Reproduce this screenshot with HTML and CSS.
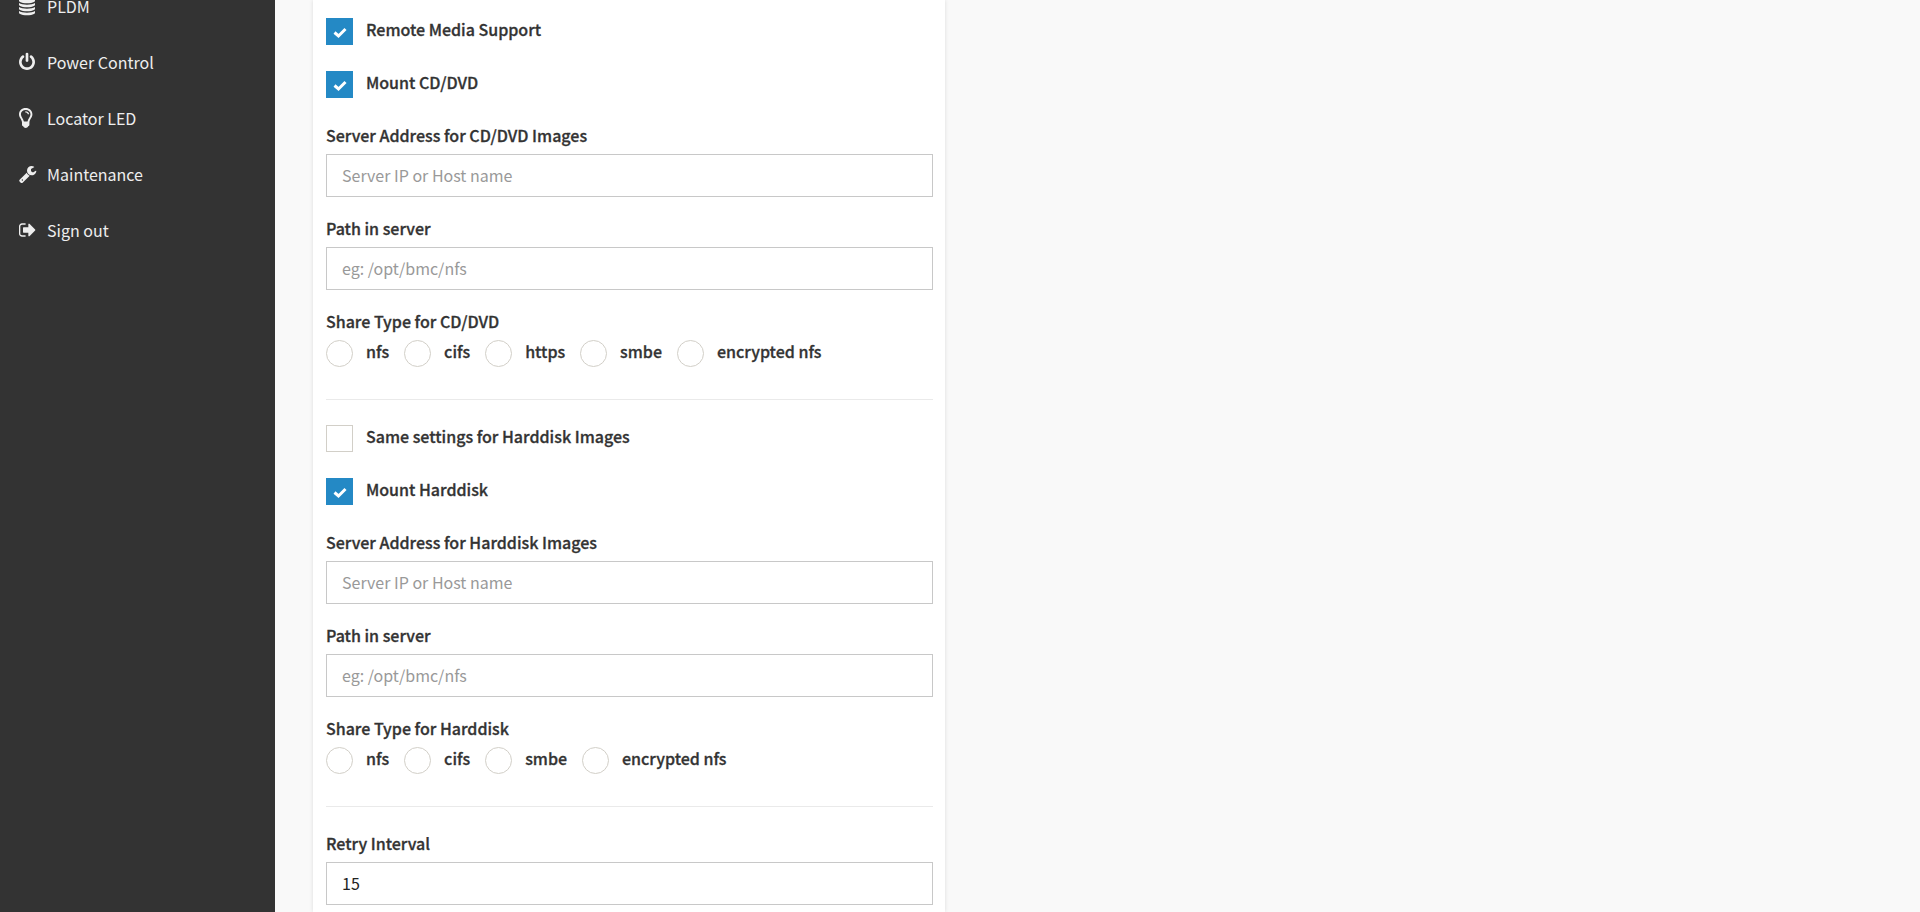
FILE: index.html
```html
<!DOCTYPE html>
<html lang="en">
<head>
<meta charset="utf-8">
<title>Media Redirection Settings</title>
<link rel="stylesheet" href="styles.css">
</head>
<body>
<div class="layout">
  <aside class="sidebar">
    <nav class="menu">
      <a class="menu-item" href="#pldm"><svg class="icon" viewBox="0 0 1536 1792"><path d="M768 768q237 0 443-43t325-127v170q0 69-103 128t-280 93.500-385 34.500-385-34.500-280-93.500-103-128v-170q119 84 325 127t443 43zm0 768q237 0 443-43t325-127v170q0 69-103 128t-280 93.500-385 34.500-385-34.500-280-93.500-103-128v-170q119 84 325 127t443 43zm0-384q237 0 443-43t325-127v170q0 69-103 128t-280 93.500-385 34.500-385-34.500-280-93.500-103-128v-170q119 84 325 127t443 43zm0-1152q208 0 385 34.500t280 93.500 103 128v128q0 69-103 128t-280 93.500-385 34.500-385-34.500-280-93.500-103-128v-128q0-69 103-128t280-93.500 385-34.500z"/></svg>PLDM</a>
      <a class="menu-item" href="#power"><svg class="icon" viewBox="0 0 1536 1792"><path d="M1536 896q0 156-61 298t-164 245-245 164-298 61-298-61-245-164-164-245-61-298q0-182 80.500-343t226.500-270q43-32 95.500-25t83.500 50q32 42 24.500 94.500t-49.500 84.500q-98 74-151.500 181t-53.500 228q0 104 40.500 198.500t109.500 163.500 163.500 109.500 198.500 40.500 198.500-40.500 163.500-109.500 109.500-163.500 40.500-198.500q0-121-53.500-228t-151.500-181q-42-32-49.500-84.500t24.500-94.500q31-43 84-50t95 25q146 109 226.500 270t80.500 343zm-640-768v640q0 52-38 90t-90 38-90-38-38-90v-640q0-52 38-90t90-38 90 38 38 90z"/></svg>Power Control</a>
      <a class="menu-item" href="#led"><svg class="icon" viewBox="0 0 16 20"><path fill-rule="evenodd" d="M6.600 0C10.500 0 13.400 2.700 13.400 6.200c0 3.400-2.700 4.700-3 8.300v2.300c0 .8-.5 1.300-1.200 1.500C8.700 19.400 7.800 20 6.700 20s-2-.6-2.500-1.700C3.500 18.100 3 17.600 3 16.800v-2.300C2.700 10.900 0 9.600 0 6.200 0 2.700 2.800 0 6.600 0zM6.700 1.900C3.900 1.900 1.900 3.800 1.900 6.200c0 2.600 2.400 4 3 7.300h3.600c.6-3.300 3-4.700 3-7.300 0-2.400-2-4.300-4.800-4.300z"/><path d="M6.300 3.300c2.200 0 3.700 1.100 3.800 2.900H8.800C8.600 5.100 7.700 4.500 6.300 4.500z"/></svg>Locator LED</a>
      <a class="menu-item" href="#maintenance"><svg class="icon" viewBox="0 0 1536 1792"><path d="M384 1472q0-26-19-45t-45-19-45 19-19 45 19 45 45 19 45-19 19-45zm644-420l-682 682q-37 37-90 37-52 0-91-37l-106-108q-38-36-38-90 0-53 38-91l681-681q39 98 114.500 173.500t173.500 114.500zm634-435q0 39-23 106-47 134-164.500 217.500t-258.500 83.500q-185 0-316.500-131.500t-131.500-316.500 131.500-316.500 316.500-131.500q58 0 121.500 16.500t107.500 46.500q16 11 16 28t-16 28l-293 169v224l193 107q5-3 79-48.500t135.500-81 70.500-35.500q15 0 23.500 10t8.500 25z"/></svg>Maintenance</a>
      <a class="menu-item" href="#signout"><svg class="icon" viewBox="0 0 1536 1792"><path d="M640 1440q0 4 1 20t.5 26.500-3 23.500-10 19.500-20.500 6.500h-320q-119 0-203.500-84.500t-84.500-203.500v-704q0-119 84.500-203.500t203.500-84.500h320q13 0 22.500 9.500t9.500 22.500q0 4 1 20t.5 26.500-3 23.500-10 19.500-20.500 6.500h-320q-66 0-113 47t-47 113v704q0 66 47 113t113 47h312l11.500 1 11.500 3 8 5.500 7 9 2 13.500zm928-544q0 26-19 45l-544 544q-19 19-45 19t-45-19-19-45v-288h-448q-26 0-45-19t-19-45v-384q0-26 19-45t45-19h448v-288q0-26 19-45t45-19 45 19l544 544q19 19 19 45z"/></svg>Sign out</a>
    </nav>
  </aside>
  <main class="content">
    <form class="panel">
      <label class="check"><input class="box" type="checkbox" checked><svg class="tick" viewBox="0 0 14 11"><path d="M1.500 5.500 5.500 9 12.500 2"/></svg>Remote Media Support</label>
      <label class="check"><input class="box" type="checkbox" checked><svg class="tick" viewBox="0 0 14 11"><path d="M1.500 5.500 5.500 9 12.500 2"/></svg>Mount CD/DVD</label>
      <div class="fields">
        <div class="field">
          <label for="cd-server">Server Address for CD/DVD Images</label>
          <input class="text" id="cd-server" type="text" placeholder="Server IP or Host name">
        </div>
        <div class="field">
          <label for="cd-path">Path in server</label>
          <input class="text" id="cd-path" type="text" placeholder="eg: /opt/bmc/nfs">
        </div>
        <div class="field" role="radiogroup" aria-labelledby="cd-share">
          <span id="cd-share">Share Type for CD/DVD</span>
          <div class="radios">
            <label class="radio"><input class="dot" type="radio" name="cd">nfs</label>
            <label class="radio"><input class="dot" type="radio" name="cd">cifs</label>
            <label class="radio"><input class="dot" type="radio" name="cd">https</label>
            <label class="radio"><input class="dot" type="radio" name="cd">smbe</label>
            <label class="radio"><input class="dot" type="radio" name="cd">encrypted nfs</label>
          </div>
        </div>
      </div>
      <hr class="rule">
      <label class="check"><input class="box" type="checkbox">Same settings for Harddisk Images</label>
      <label class="check"><input class="box" type="checkbox" checked><svg class="tick" viewBox="0 0 14 11"><path d="M1.500 5.500 5.500 9 12.500 2"/></svg>Mount Harddisk</label>
      <div class="fields">
        <div class="field">
          <label for="hd-server">Server Address for Harddisk Images</label>
          <input class="text" id="hd-server" type="text" placeholder="Server IP or Host name">
        </div>
        <div class="field">
          <label for="hd-path">Path in server</label>
          <input class="text" id="hd-path" type="text" placeholder="eg: /opt/bmc/nfs">
        </div>
        <div class="field" role="radiogroup" aria-labelledby="hd-share">
          <span id="hd-share">Share Type for Harddisk</span>
          <div class="radios">
            <label class="radio"><input class="dot" type="radio" name="hd">nfs</label>
            <label class="radio"><input class="dot" type="radio" name="hd">cifs</label>
            <label class="radio"><input class="dot" type="radio" name="hd">smbe</label>
            <label class="radio"><input class="dot" type="radio" name="hd">encrypted nfs</label>
          </div>
        </div>
      </div>
      <hr class="rule">
      <div class="field">
        <label for="retry">Retry Interval</label>
        <input class="text" id="retry" type="text" value="15">
      </div>
    </form>
  </main>
</div>
</body>
</html>
```
FILE: styles.css
```css
* {
  box-sizing: border-box;
}

body {
  margin: 0;
  background: #f9f9f9;
  color: #333;
  font: 16px/22px "Noto Sans CJK SC", "Noto Sans", sans-serif;
}

.layout {
  display: flex;
  min-height: 100vh;
}

.sidebar {
  flex: 0 0 275px;
  overflow: hidden;
  background: #333;
}

.menu {
  display: flex;
  flex-direction: column;
  margin-top: -22px;
}

.menu-item {
  display: flex;
  align-items: center;
  gap: 12px;
  height: 56px;
  padding-left: 19px;
  color: #eee;
  text-decoration: none;
}

.icon {
  width: 16px;
  height: 20px;
  fill: currentColor;
  overflow: visible;
}

.content {
  flex: 1;
  display: flex;
  padding: 0 27px 0 38px;
}

.panel {
  width: 40%;
  padding: 18px 12px 0 13px;
  background: #fff;
  box-shadow: 0 0 4px rgba(0, 0, 0, 0.12);
  font-weight: 500;
  -webkit-text-stroke: 0.3px currentColor;
}

.check {
  position: relative;
  display: flex;
  gap: 13px;
  height: 27px;
  margin-bottom: 26px;
}

.box,
.dot {
  appearance: none;
  flex: none;
  width: 27px;
  height: 27px;
  margin: 0;
  border: 1px solid #d2cfc8;
  background: #fff;
}

.dot {
  border-radius: 50%;
}

.box:checked {
  border-color: #2489c5;
  background: #2489c5;
}

.tick {
  position: absolute;
  top: 9px;
  left: 7px;
  width: 14px;
  height: 11px;
  fill: none;
  stroke: #fff;
  stroke-width: 3;
  overflow: visible;
}

.fields {
  display: flex;
  flex-direction: column;
  gap: 20px;
}

.field {
  display: flex;
  flex-direction: column;
  gap: 8px;
}

.text {
  width: 100%;
  height: 43px;
  padding: 0 15px 2px;
  border: 1px solid #c8c8c8;
  border-radius: 0;
  background: #fff;
  color: #222;
  font: inherit;
  font-weight: 400;
  -webkit-text-stroke: 0;
}

.text::placeholder {
  color: #999;
  opacity: 1;
}

.radios {
  display: flex;
  gap: 15px;
}

.radio {
  display: flex;
  gap: 13px;
}

.rule {
  margin: 32px 0 25px;
  border: 0;
  border-top: 1px solid #eaeaea;
}
```
